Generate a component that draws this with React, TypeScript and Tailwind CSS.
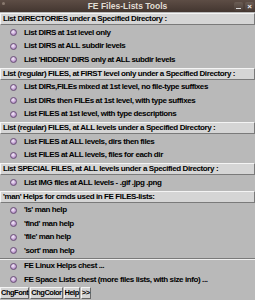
import React from "react";

const Radio = ({ label }: { label: string }) => (
  <div className="flex h-[13.5px] items-center pl-[10px]">
    <span className="mr-[7px] h-[7px] w-[7px] shrink-0 rounded-full border border-[#6a4f78] bg-[radial-gradient(circle_at_40%_35%,#f6eefa,#c6a6d6_55%,#8a6498)]" />
    <span className="whitespace-nowrap">{label}</span>
  </div>
);

const Header = ({ label }: { label: string }) => (
  <div className="py-[1px]">
    <div className="flex h-[12px] items-center whitespace-nowrap border border-t-[#f4f4f4] border-l-[#f4f4f4] border-b-[#7a7a7a] border-r-[#7a7a7a] bg-[#d5d5d5] pl-[2px]">
      {label}
    </div>
  </div>
);

export default function App() {
  return (
    <div
      className="relative h-[300px] w-[255px] overflow-hidden bg-[#b9b9b9] text-[8px] font-semibold leading-none tracking-[-0.4px] text-black"
      style={{ fontFamily: '"Liberation Sans", Arial, sans-serif' }}
    >
      <div className="relative flex h-[12px] items-center justify-center bg-[linear-gradient(#5d4d45,#433630)] text-[8.5px] font-bold tracking-normal text-[#e2ddd4]">
        <span className="absolute left-[2px] top-[2px] h-[3px] w-[3px] rounded-full bg-[#8a7a70]" />
        <span>FE Files-Lists Tools</span>
        <div className="absolute right-[1px] top-[2px] flex gap-[2px]">
          <span className="flex h-[9px] w-[9px] items-end justify-center rounded-[2px] bg-[linear-gradient(#6b5d55,#4a3d37)] pb-[2px]">
            <span className="h-[1px] w-[5px] bg-[#ddd]" />
          </span>
          <span className="flex h-[9px] w-[9px] items-center justify-center rounded-[2px] bg-[linear-gradient(#6b5d55,#4a3d37)] text-[8px] font-bold text-[#eee]">
            ×
          </span>
        </div>
      </div>
      <Header label="List DIRECTORIES under a Specified Directory :" />
      <Radio label="List DIRS at 1st level only" />
      <Radio label="List DIRS at ALL subdir levels" />
      <Radio label="List 'HIDDEN' DIRS only at ALL subdir levels" />
      <Header label="List (regular) FILES, at FIRST level only under a Specified Directory :" />
      <Radio label="List DIRs,FILEs mixed at 1st level, no file-type suffixes" />
      <Radio label="List DIRs then FILEs at 1st level, with type suffixes" />
      <Radio label="List FILES at 1st level, with type descriptions" />
      <Header label="List (regular) FILES, at ALL levels under a Specified Directory :" />
      <Radio label="List FILES at ALL levels, dirs then files" />
      <Radio label="List FILES at ALL levels, files for each dir" />
      <Header label="List SPECIAL FILES, at ALL levels under a Specified Directory :" />
      <Radio label="List IMG files at ALL levels - .gif .jpg .png" />
      <Header label="'man' Helps for cmds used in FE FILES-lists:" />
      <Radio label="'ls' man help" />
      <Radio label="'find' man help" />
      <Radio label="'file' man help" />
      <Radio label="'sort' man help" />
      <div className="h-[2px] border-t border-b border-t-[#7a7a7a] border-b-[#f0f0f0]" />
      <Radio label="FE Linux Helps chest ..." />
      <Radio label="FE Space Lists chest (more files lists, with size info) ..." />
      <div className="flex h-[12px] items-stretch gap-[1px] text-[7.5px] tracking-[-0.5px]">
        {["ChgFont", "ChgColor", "Help", ">>"].map((b) => (
          <div
            key={b}
            className="flex items-center border border-t-[#f4f4f4] border-l-[#f4f4f4] border-b-[#6a6a6a] border-r-[#6a6a6a] bg-[#d5d5d5] px-0"
          >
            {b}
          </div>
        ))}
      </div>
    </div>
  );
}
